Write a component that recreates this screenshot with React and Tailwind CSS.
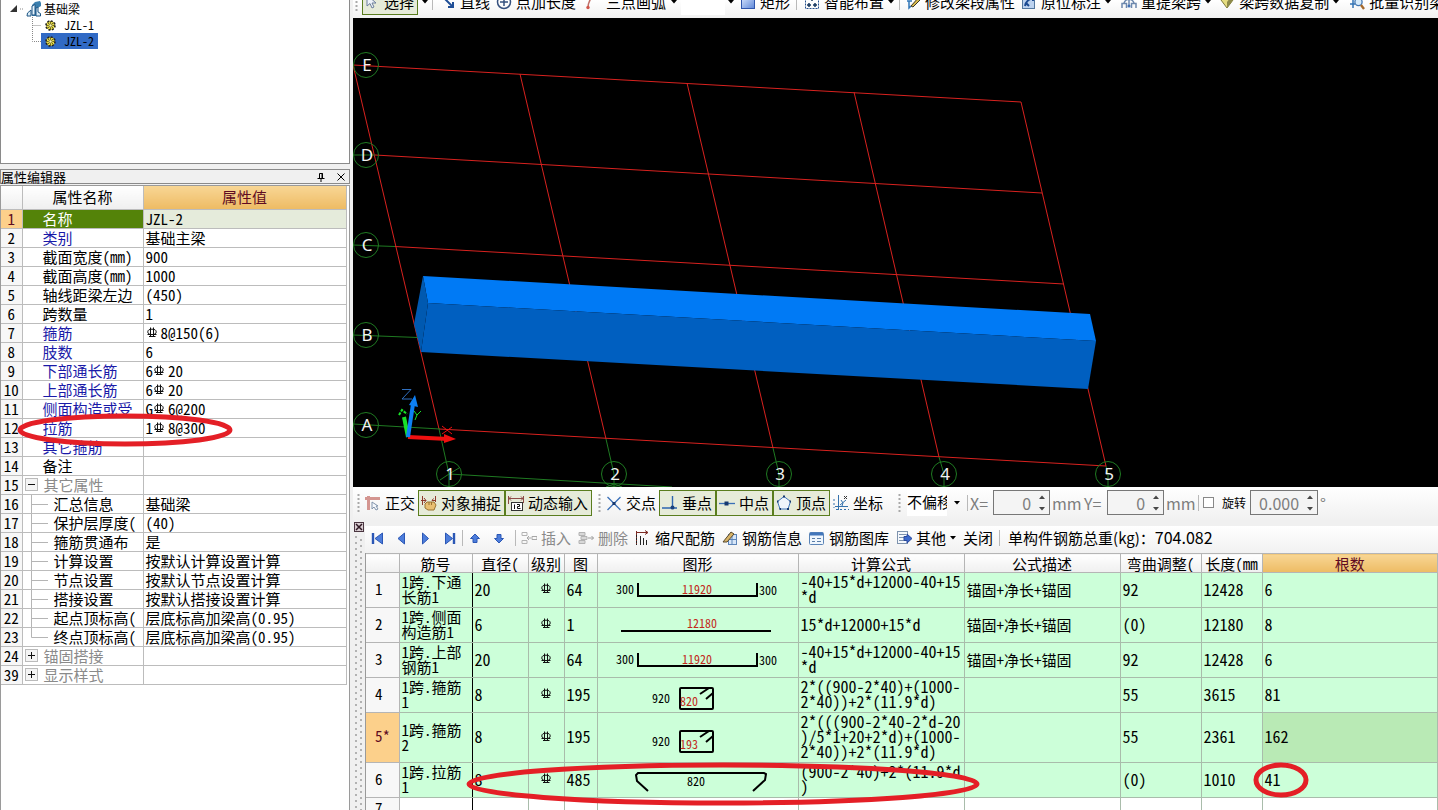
import React from "react";

const MONO = "font-['Noto_Sans_Mono_CJK_SC','Noto_Sans_CJK_SC',monospace]";
const SANS = "font-['Noto_Sans_CJK_SC',sans-serif]";

/* ---------- small drawings ---------- */

function Rebar() {
  return (
    <svg className="mr-0.5 inline-block align-[0px]" width="13" height="12" viewBox="0 0 13 12" fill="none" stroke="#111" strokeWidth="1" role="img" aria-label="HRB400">
      <path d="M4.5 0.5V10M7.5 0.5V10M3 9.5H9.5M1.5 7.500H10.5" />
      <ellipse cx="6" cy="4.9" rx="4.2" ry="2.7" />
    </svg>
  );
}

const Caret = () => (
  <svg width="6" height="4" viewBox="0 0 6 4" className="shrink-0"><path d="M0 0H6L3 3.5Z" fill="#000" /></svg>
);

function Svg({ children, w = 16, h = 16 }) {
  return (
    <svg width={w} height={h} viewBox={`0 0 ${w} ${h}`} fill="none" className="shrink-0">{children}</svg>
  );
}

const icons = {
  cursor: <Svg><path d="M3 1V12L6 9.5L8 14L10 13L8 9H12Z" fill="#eef3fa" stroke="#6c7f9c" /></Svg>,
  line: <Svg><path d="M3 3L13 13M13 8V13H8" stroke="#1f4e96" strokeWidth="2" /></Svg>,
  plusCircle: <Svg><circle cx="8" cy="8" r="6.5" stroke="#35507e" strokeWidth="1.5" /><path d="M8 4V12M4 8H12" stroke="#35507e" strokeWidth="1.5" /></Svg>,
  arc: <Svg w={8}><path d="M2 14C2 9 4 5 7 2" stroke="#c07068" strokeWidth="1.5" /><circle cx="2" cy="13.5" r="1.7" fill="#d0564a" /></Svg>,
  rect: <Svg><defs><linearGradient id="rg" x1="0" y1="0" x2="1" y2="1"><stop offset="0" stopColor="#dbe8ff" /><stop offset="1" stopColor="#5c86d8" /></linearGradient></defs><rect x="1.5" y="2.5" width="13" height="12" fill="url(#rg)" stroke="#2f56ad" /></Svg>,
  smart: <Svg><rect x="1.5" y="1.5" width="13" height="13" stroke="#24518f" strokeDasharray="2 1" /><path d="M5 9V13M3 11H7M11 9V13M9 11H13M8 3V7M6 5H10" stroke="#16375f" strokeWidth="1.500" /></Svg>,
  editSpan: <Svg><path d="M1 3H8M2 7H7M4 7V14L6 12" stroke="#3177b8" strokeWidth="1.5" /><path d="M6 12L14 3L16 5L8 13Z" fill="#d9ba4a" stroke="#3d3823" /></Svg>,
  origin: <Svg><rect x="1.5" y="3.5" width="12" height="11" fill="#bcd2ef" stroke="#53779f" /><path d="M4 12C5 7 8 5 12 4M12 1V7M5 9L8 12" stroke="#1c4b93" strokeWidth="2" /></Svg>,
  spans: <Svg><path d="M1 14V9.500H5.500V14M10.500 14V9.500H15V14M3 9C5 4 11 4 13 9M8 12V6" stroke="#6d88ad" strokeWidth="1.5" /><circle cx="8" cy="12" r="1.5" fill="#3f6fb5" /></Svg>,
  copy: <Svg><path d="M2 6L8 2L14 6L8 14Z" fill="#e6dd80" stroke="#7e7a3c" /><path d="M8 14L14 6L11 4L8 8Z" fill="#8d8a4a" /></Svg>,
  identify: <Svg><path d="M1 5H6M1 10H6M4 2V14M10 2V5" stroke="#3474b5" strokeWidth="1.5" /><circle cx="9.5" cy="8" r="3.6" fill="#d8ecfb" stroke="#4378b3" strokeWidth="1.3" /><path d="M12 11L15 15" stroke="#a5692c" strokeWidth="2.4" /></Svg>,
  ortho: <Svg><path d="M0 3.5H15M3.5 1V15" stroke="#d49590" strokeWidth="3" /><path d="M7 7V14L9 12L11 15L13 14L11 11H13Z" fill="#f5f8fc" stroke="#8093ab" /></Svg>,
  snap: <Svg><path d="M1.5 1V10M14.5 1V7M0 5.5H5M3 3L5 5.5L3 8M15 5.5H11M12.500 3.500L11 5.500" stroke="#8e3a2c" /><path d="M4 9L6 7H13L15 10L13 15H7L4 13Z" fill="#e8bf72" stroke="#9a7433" /><path d="M8 7V10M10.500 7V10" stroke="#9a7433" /></Svg>,
  dynamic: <Svg><path d="M0.500 1V9M15.500 1V8M1 3.500H15M3 1.500L1 3.500L3 5.500M13 1.500L15 3.500L13 5.500" stroke="#8e4a46" /><rect x="3.500" y="7.500" width="11" height="8" fill="#fff" stroke="#333" /><path d="M6.500 9.500V14M9 9.500H11.500V11.500H9.500V13.500H12.500" stroke="#111" /></Svg>,
  cross: <Svg><path d="M1.500 2L14.500 15M14.500 2L1.500 15" stroke="#3a6fb7" strokeWidth="1.3" /><rect x="6.500" y="7" width="3" height="3" fill="#16386f" /></Svg>,
  perp: <Svg><path d="M10.500 1V13M0 13H15" stroke="#2e66b0" strokeWidth="1.4" /><circle cx="10.500" cy="12.500" r="2" fill="#1b427e" /></Svg>,
  mid: <Svg><path d="M0 8.500H16" stroke="#3a6fb7" strokeWidth="1.3" /><rect x="5.500" y="6.500" width="4" height="4" fill="#16386f" /></Svg>,
  vertex: <Svg><path d="M8 1.500L14.500 6.500L12 14H4L1.500 6.500Z" fill="#f1f6fb" stroke="#4076bb" /><path d="M7 1.500H9M1 6.500H2.500M13.500 6.500H15M3.500 14H5M11 14H13" stroke="#16386f" strokeWidth="2" /></Svg>,
  coord: <Svg><path d="M5.500 0V15M2 11.500H15M7 10L13 5M8 5L10 8L9 11" stroke="#3471ac" /><path d="M1 4V13M3 14.500H16" stroke="#3471ac" strokeDasharray="2 2" /><path d="M11 1L14 4M14 1L11 4" stroke="#333" /></Svg>,
  insert: <Svg><path d="M1 2.500H6V5.500H1ZM1 10.500H6V13.500H1Z" stroke="#b3b3b3" /><path d="M6 8H10M8 6L6 8L8 10M11 6.500H16V9.500H11Z" stroke="#a6a6a6" /></Svg>,
  remove: <Svg><path d="M1 2.500H7V5.500H1ZM1 10.500H7V13.500H1ZM3 6.500H9V9.500H3Z" fill="#d8d8d8" stroke="#b3b3b3" /><path d="M10 8H15.500M13.500 6L15.500 8L13.500 10" stroke="#9c9c9c" /></Svg>,
  scale: <Svg><path d="M1.500 1V15M1 2.500H13M10 0.500L13 2.500L10 4.500" stroke="#7d2c25" /><path d="M5.500 6V15M8.500 8V15M11.500 10V15" stroke="#222" /><path d="M1.500 5V15" stroke="#222" strokeDasharray="2 1" /></Svg>,
  info: <Svg><rect x="6.500" y="4.500" width="8" height="10" fill="#d7e6f8" stroke="#5d85b8" /><path d="M10 5V14M6 9.500H15" stroke="#5d85b8" /><path d="M1 12L9 2L12 4L5 12Z" fill="#d8b468" stroke="#57472b" /></Svg>,
  library: <Svg><rect x="0.500" y="2.500" width="14" height="12" rx="1" fill="#eff6fd" stroke="#5b84b7" /><path d="M1 4H14" stroke="#4276bb" strokeWidth="3" /><path d="M3 8.500H6M3 11.500H6M8 8.500H12M8 11.500H12" stroke="#5a7da8" /></Svg>,
  other: <Svg><rect x="1.500" y="1.500" width="10" height="12" fill="#f5f8fc" stroke="#7e93ae" /><path d="M3 4.500H10M3 7.500H8M3 10.500H8" stroke="#7e93ae" /><path d="M8 6.500H11V4L16 8.500L11 13V10.500H8Z" fill="#3c69cc" stroke="#29489c" /></Svg>,
  first: <Svg><path d="M3 3V14" stroke="#2b57b5" strokeWidth="2.400" /><path d="M12.500 3V14L5 8.500Z" fill="#4d7ddb" stroke="#2b57b5" /></Svg>,
  prev: <Svg><path d="M10.500 3V14L4 8.500Z" fill="#4d7ddb" stroke="#2b57b5" /></Svg>,
  next: <Svg><path d="M4.500 3V14L10.500 8.500Z" fill="#4d7ddb" stroke="#2b57b5" /></Svg>,
  last: <Svg><path d="M12 3V14" stroke="#2b57b5" strokeWidth="2.400" /><path d="M3.500 3V14L10.500 8.500Z" fill="#4d7ddb" stroke="#2b57b5" /></Svg>,
  up: <Svg><path d="M8 4L12.500 8.500H10V12.500H6V8.500H3.500Z" fill="#4d7ddb" stroke="#2b57b5" /></Svg>,
  down: <Svg><path d="M8 13L12.500 8.500H10V4.500H6V8.500H3.500Z" fill="#4d7ddb" stroke="#2b57b5" /></Svg>,
};

const Gear = () => (
  <svg width="11" height="11" viewBox="0 0 11 11" className="shrink-0">
    <circle cx="5.500" cy="5.500" r="4.500" fill="#eee34a" stroke="#222" strokeWidth="1.600" strokeDasharray="2 1.500" />
    <path d="M5.500 1V3.500M5.500 7.500V10M1 5.500H3.500M7.500 5.500H10M2.300 2.300L4 4M7 7L8.700 8.700M8.700 2.300L7 4M4 7L2.300 8.700" stroke="#4e4a18" strokeWidth="0.800" />
    <circle cx="5.500" cy="5.500" r="1.600" fill="#fbf7b8" stroke="#4e4a18" strokeWidth="0.700" />
  </svg>
);

/* ---------- toolbar parts ---------- */

const Sep = ({ className = "" }) => <div className={`h-4 w-px shrink-0 bg-[#b9b9b9] ${className}`} />;

const Grip = ({ className = "" }) => (
  <svg width="3" height="20" viewBox="0 0 3 20" className={`shrink-0 ${className}`}>
    <path d="M1.500 1V20" stroke="#a9a9a9" strokeWidth="2" strokeDasharray="2 2" />
  </svg>
);

function Tool({ icon, label, on, off, caret, className = "" }) {
  return (
    <button
      type="button"
      disabled={off}
      className={`flex h-[26px] shrink-0 items-center gap-1 border text-[15px] leading-5 whitespace-nowrap ${
        on ? "border-[#5a7d1e] bg-[#e6ebd9]" : "border-transparent"
      } ${off ? "text-[#8a8a8a]" : "text-black"} ${className}`}
    >
      {icon && icons[icon]}
      {label}
      {caret && <Caret />}
    </button>
  );
}

function TopToolbar() {
  return (
    <div className="flex h-[18px] items-end overflow-hidden bg-linear-to-b from-white to-[#f1f1f1] pb-[3px]">
      <div className="flex items-center">
        <Grip className="mr-1 ml-0.5" />
        <Tool icon="cursor" label="选择" on className="w-[56px] pl-px" />
        <button type="button" aria-label="选择方式" className="flex w-[14px] justify-center"><Caret /></button>
        <Sep className="mr-1.5" />
        <Tool icon="line" label="直线" className="mr-1" />
        <Tool icon="plusCircle" label="点加长度" className="mr-2" />
        <Tool icon="arc" label="三点画弧" className="gap-3" />
        <button type="button" aria-label="画弧方式" className="flex w-[14px] justify-center"><Caret /></button>
        <select aria-label="画弧半径" className="h-[26px] w-[44px] appearance-none bg-white"><option></option></select>
        <button type="button" aria-label="展开半径" className="flex w-[12px] justify-center"><Caret /></button>
        <Tool icon="rect" label="矩形" className="mr-1 ml-0.5" />
        <Sep className="mr-1.5 ml-px" />
        <Tool icon="smart" label="智能布置" caret />
        <Sep className="mr-1 ml-1" />
        <Tool icon="editSpan" label="修改梁段属性" className="mr-1" />
        <Tool icon="origin" label="原位标注" caret className="mr-2" />
        <Tool icon="spans" label="重提梁跨" caret className="mr-1.5" />
        <Tool icon="copy" label="梁跨数据复制" caret className="mr-2" />
        <Tool icon="identify" label="批量识别梁支座" />
      </div>
    </div>
  );
}

function Spin({ label, value, className }) {
  return (
    <div className={`flex h-[25px] items-center border border-[#777] bg-[#f4f4f4] pr-1 ${className}`}>
      <input aria-label={label} defaultValue={value} className="w-full min-w-0 bg-transparent pr-2 text-right text-base text-[#7d7d7d] outline-none" />
      <div className="flex flex-col gap-2">
        <button type="button" aria-label={`${label} 增大`} className="rotate-180 opacity-70"><Caret /></button>
        <button type="button" aria-label={`${label} 减小`} className="opacity-70"><Caret /></button>
      </div>
    </div>
  );
}

function SnapToolbar() {
  return (
    <div className="flex h-[33px] items-center overflow-hidden bg-linear-to-b from-white to-[#f1f1f1] pb-0.5 pl-1">
      <Grip className="mr-1" />
      <Tool icon="ortho" label="正交" className="mr-0.5" />
      <Tool icon="snap" label="对象捕捉" on className="w-[87px] pl-0.5" />
      <Tool icon="dynamic" label="动态输入" on className="w-[87px] pl-0.5" />
      <Grip className="mr-1 ml-1.5" />
      <Tool icon="cross" label="交点" className="mr-0.5" />
      <Tool icon="perp" label="垂点" on className="w-[57px] pl-0.5" />
      <Tool icon="mid" label="中点" on className="w-[57px] pl-0.5" />
      <Tool icon="vertex" label="顶点" on className="w-[57px] pl-0.5" />
      <Tool icon="coord" label="坐标" className="ml-0.5" />
      <Grip className="mr-1.5 ml-3.5" />
      <select aria-label="偏移方式" className="h-[26px] w-[40px] appearance-none bg-white text-[15px]"><option>不偏移</option></select>
      <button type="button" aria-label="展开偏移方式" className="flex w-5 justify-center"><Caret /></button>
      <Sep className="mr-0.5" />
      <span className="w-[23px] text-base text-[#7d7d7d]">X=</span>
      <Spin label="X" value="0" className="w-[57px] shrink-0" />
      <span className="ml-0.5 w-8 text-base text-[#7d7d7d]">mm</span>
      <span className="w-[23px] text-base text-[#7d7d7d]">Y=</span>
      <Spin label="Y" value="0" className="w-[57px] shrink-0" />
      <span className="ml-0.5 w-8 text-base text-[#7d7d7d]">mm</span>
      <Sep className="mr-1" />
      <label className="flex items-center gap-2 text-[12px] whitespace-nowrap">
        <input type="checkbox" className="size-[11px] appearance-none border border-[#888] bg-white" />
        旋转
      </label>
      <Spin label="旋转角度" value="0.000" className="ml-1 w-[68px] shrink-0" />
      <span className="ml-0.5 text-base text-[#7d7d7d]">°</span>
    </div>
  );
}

function RebarToolbar() {
  return (
    <div className="flex h-[27px] items-center overflow-hidden bg-linear-to-b from-white to-[#f1f1f1] pb-1 pl-[5px]">
      <div className="flex gap-1.5">
        {[["first", "首条"], ["prev", "上一条"], ["next", "下一条"], ["last", "末条"]].map(([k, t]) => (
          <button key={k} type="button" aria-label={t} className="flex w-[18px]">{icons[k]}</button>
        ))}
      </div>
      <Sep className="mr-1 ml-0.5" />
      <button type="button" aria-label="上移" className="mr-2">{icons.up}</button>
      <button type="button" aria-label="下移" className="mr-2">{icons.down}</button>
      <Sep className="mr-1" />
      <Tool icon="insert" label="插入" off className="mr-[5px]" />
      <Tool icon="remove" label="删除" off className="mr-[5px]" />
      <Tool icon="scale" label="缩尺配筋" className="mr-[5px]" />
      <Tool icon="info" label="钢筋信息" className="mr-[5px]" />
      <Tool icon="library" label="钢筋图库" className="mr-[5px]" />
      <Tool icon="other" label="其他" caret className="mr-[5px]" />
      <Tool label="关闭" className="mr-[5px]" />
      <Sep className="mr-2" />
      <span className="text-[15px] leading-5 whitespace-nowrap">单构件钢筋总重(kg)：<span className="text-base leading-5">704.082</span></span>
    </div>
  );
}

/* ---------- left side ---------- */

function Tree() {
  return (
    <div className="h-[164px] border-x border-b border-[#8a8a8a] bg-white pt-px pl-[9px] text-[12px]">
      <div className="flex h-4 items-center">
        <svg width="8" height="8" viewBox="0 0 8 8"><path d="M7 0V7H0Z" fill="#333" /></svg>
        <svg width="4" height="2" className="mx-0.5"><path d="M0 1H4" stroke="#888" strokeDasharray="1 1" /></svg>
        <svg width="16" height="16" viewBox="0 0 16 16" className="mr-0.5">
          <path d="M6 4L9 1L14 0L15 2V5L10 8V15H6Z" fill="#3b7fae" />
          <path d="M6 5L9 3.500V14H6Z" fill="#e6f3fb" stroke="#1d5584" />
          <path d="M1 15L1.500 12L5 9V15ZM10 15V7L12 6V11L14.500 12.500V15Z" fill="#dcedf8" stroke="#1d5584" />
        </svg>
        <span className="leading-4">基础梁</span>
      </div>
      <ul className={`ml-[22px] ${MONO}`}>
        {["JZL-1", "JZL-2"].map((n, i) => (
          <li key={n} className="flex h-4 items-center">
            <svg width="9" height="16" viewBox="0 0 9 16">
              <path d={i ? "M0.500 0V8.500H9" : "M0.500 0V16M0.500 8.500H9"} fill="none" stroke="#888" strokeDasharray="1 1" />
            </svg>
            <a href={`#${n}`} className={`flex h-4 w-[57px] items-center gap-2 pl-1 ${i ? "bg-[#316ac5]" : ""}`}>
              <Gear />
              <span className="leading-4">{n}</span>
            </a>
          </li>
        ))}
      </ul>
    </div>
  );
}

const R = "⌀";
const props = [
  ["1", "名称", "JZL-2", "sel"],
  ["2", "类别", "基础主梁", "blue"],
  ["3", "截面宽度(mm)", "900"],
  ["4", "截面高度(mm)", "1000"],
  ["5", "轴线距梁左边", "(450)"],
  ["6", "跨数量", "1"],
  ["7", "箍筋", R + "8@150(6)", "blue"],
  ["8", "肢数", "6", "blue"],
  ["9", "下部通长筋", "6" + R + "20", "blue"],
  ["10", "上部通长筋", "6" + R + "20", "blue"],
  ["11", "侧面构造或受", "G" + R + "6@200", "blue"],
  ["12", "拉筋", "1" + R + "8@300", "blue"],
  ["13", "其它箍筋", "", "blue"],
  ["14", "备注", ""],
  ["15", "其它属性", "", "minus"],
  ["16", "汇总信息", "基础梁", "child"],
  ["17", "保护层厚度(", "(40)", "child"],
  ["18", "箍筋贯通布", "是", "child"],
  ["19", "计算设置", "按默认计算设置计算", "child"],
  ["20", "节点设置", "按默认节点设置计算", "child"],
  ["21", "搭接设置", "按默认搭接设置计算", "child"],
  ["22", "起点顶标高(", "层底标高加梁高(0.95)", "child"],
  ["23", "终点顶标高(", "层底标高加梁高(0.95)", "last"],
  ["24", "锚固搭接", "", "plus"],
  ["39", "显示样式", "", "plus"],
];

const nameStyle = {
  sel: "bg-[#548309] text-white pl-5",
  blue: "text-[#1a1aa8] pl-5",
  plain: "pl-5",
  minus: "text-[#8a8a8a]",
  plus: "text-[#8a8a8a]",
  child: "",
  last: "",
};

function Toggle({ open }) {
  return (
    <button type="button" aria-label={open ? "折叠" : "展开"} className="mr-1.5 ml-0.5 flex shrink-0">
      <svg width="13" height="13" viewBox="0 0 13 13" fill="none">
        <rect x="0.500" y="0.500" width="12" height="12" fill="#f4f4f4" stroke="#bbb" />
        <path d={open ? "M3 6.500H10" : "M3 6.500H10M6.500 3V10"} stroke="#111" />
      </svg>
    </button>
  );
}

function Branch({ last }) {
  return (
    <svg width="30" height="18" viewBox="0 0 30 18" fill="none" className="mr-px shrink-0">
      <path d={last ? "M8.500 0V9.500H25" : "M8.500 0V18M8.500 9.500H25"} stroke="#b5b5b5" />
    </svg>
  );
}

function PropertyEditor() {
  return (
    <div className="mt-[5px] flex min-h-0 flex-1 flex-col">
      <div className="flex h-[15px] shrink-0 items-center border border-[#8a8a8a] bg-[#f0f0f0] pr-1">
        <h2 className="flex-1 text-[13px] leading-[13px]">属性编辑器</h2>
        <button type="button" aria-label="固定" className="mr-3">
          <svg width="8" height="10" viewBox="0 0 8 10" fill="none" stroke="#000"><path d="M2.500 6V1.500H5.500V6M5 1V6M0.500 6.500H7.500M4 7V10" /></svg>
        </button>
        <button type="button" aria-label="关闭">
          <svg width="8" height="8" viewBox="0 0 8 8" stroke="#000"><path d="M0.500 0.500L7.500 7.500M7.500 0.500L0.500 7.500" /></svg>
        </button>
      </div>
      <div className="mt-px flex-1 border-x border-t border-[#9a9a9a] bg-white pr-px">
        <table className={`w-[345px] table-fixed border-collapse text-[15px] leading-[18px] ${MONO}`}>
          <colgroup><col className="w-[21px]" /><col className="w-[121px]" /><col className="w-[203px]" /></colgroup>
          <thead>
            <tr className="h-[23px] [&>th]:border [&>th]:border-t-0 [&>th]:border-l-0 [&>th]:border-[#bcbcbc] [&>th]:p-0 [&>th]:font-normal">
              <th className="bg-linear-to-b from-white to-[#efefef]" />
              <th className="bg-linear-to-b from-white to-[#efefef]">属性名称</th>
              <th className="bg-linear-to-b from-[#f8d694] to-[#edbb63] text-[#5f0b22]">属性值</th>
            </tr>
          </thead>
          <tbody>
            {props.map(([n, name, val, kind = "plain"]) => (
              <tr key={n} className="h-[19px]">
                <th scope="row" className={`overflow-hidden border-r border-b border-[#bcbcbc] p-0 text-center font-normal ${kind === "sel" ? "bg-[#fcd08b] text-[#5f0b22]" : "bg-[#f7f7f7]"}`}>{n}</th>
                <td className={`overflow-hidden border-r border-b border-[#bcbcbc] p-0 whitespace-nowrap ${nameStyle[kind]}`}>
                  <div className="flex h-[18px] items-center">
                    {(kind === "minus" || kind === "plus") && <Toggle open={kind === "minus"} />}
                    {(kind === "child" || kind === "last") && <Branch last={kind === "last"} />}
                    {name}
                  </div>
                </td>
                <td className={`overflow-hidden border-r border-b border-[#bcbcbc] py-0 pr-0 pl-0.5 whitespace-nowrap ${kind === "sel" ? "bg-[#e5ebdb]" : ""}`}>
                  <div className="h-[18px]">
                    {val.split(R).map((p, i) => <React.Fragment key={i}>{i > 0 && <Rebar />}{p}</React.Fragment>)}
                  </div>
                </td>
              </tr>
            ))}
          </tbody>
        </table>
      </div>
    </div>
  );
}

/* ---------- 3D view ---------- */

const bubbles = [
  ["E", 366, 65], ["D", 366, 155], ["C", 366, 245], ["B", 366, 335], ["A", 366, 425],
  ["1", 449, 474], ["2", 614, 474], ["3", 779, 474], ["4", 944, 474], ["5", 1108, 474],
];

function Scene() {
  return (
    <div className="h-[469px] overflow-hidden bg-black">
      <svg className="block h-full w-full" viewBox="353 18 1085 469" preserveAspectRatio="xMinYMin slice" fill="none" role="img" aria-label="三维视图">
        <path stroke="#d8221f" d="M353 65L1021 102M375 155L1042 193M395 246.500L1064 284M439 429L1106 466M353 65L439 429M520 74L606 439M687 83L773 448M854 92L939 457M1021 102L1106 466" />
        <path stroke="#1f7a22" d="M353 155H375M353 245L395 246.500M353 335L418 337.500M353 424L440 429M439 429L449 474M606 439L614 474M773 448L779 474M939 457L944 474M1106 466L1108 474M449 474L672 487M449 474L440 480M449 474L459 468M449 474V487M614 474V487M779 474V487M614 484L606 487M614 484L622 487M944 487V474M1108 487V474" />
        <g stroke="#1f7a22">{bubbles.map(([t, x, y]) => <circle key={t} cx={x} cy={y} r="12.500" />)}</g>
        <path d="M423 276L1090 314L1096 341L428 303Z" fill="#007af5" />
        <path d="M428 303L1096 341L1088 389L421 352Z" fill="#005fc0" />
        <path d="M423 276L428 303L421 352L414 324Z" fill="#0059b0" />
        <g fill="#f2f2f2" fontSize="17" textAnchor="middle" className="font-['Noto_Sans',sans-serif]">
          {bubbles.map(([t, x, y]) => <text key={t} x={x + 1} y={y + 6}>{t}</text>)}
        </g>
        <path d="M408 437L404 417" stroke="#18e028" strokeWidth="4" />
        <path d="M399 415L402 410L407 414" stroke="#18e028" strokeWidth="2" strokeDasharray="3 1" />
        <path d="M414 411L417 415L421 411M417 415L415 420" stroke="#18e028" />
        <path d="M408 437L448 439" stroke="#f01010" strokeWidth="4" />
        <path d="M444 434L456 439L444 443Z" fill="#f01010" />
        <path d="M442 426L452 434M452 427L442 434" stroke="#f01010" />
        <path d="M408 437L413 404" stroke="#0d80f5" strokeWidth="4" />
        <path d="M409 405L415 395L418 407Z" fill="#0d80f5" />
        <path d="M402 389.500H411L402 399H412" stroke="#2f6fbf" />
      </svg>
    </div>
  );
}

/* ---------- rebar table ---------- */

const RED = "#c22a1c";

function Shape({ children }) {
  return (
    <svg width="200" height="34" viewBox="0 0 200 34" fill="#000" fontSize="12" className={`-mb-0.5 block ${MONO}`}>{children}</svg>
  );
}
const ShapeU = () => (
  <Shape>
    <path d="M40 9V22H159V9" fill="none" stroke="#000" strokeWidth="2" />
    <text x="18" y="20">300</text>
    <text x="161" y="21">300</text>
    <text x="84" y="20" fill={RED}>11920</text>
  </Shape>
);
const ShapeLine = () => (
  <Shape>
    <path d="M23 22H173" fill="none" stroke="#000" strokeWidth="2" />
    <text x="89" y="19" fill={RED}>12180</text>
  </Shape>
);
const ShapeBox = ({ v }) => (
  <Shape>
    <rect x="82" y="9" width="33" height="21" rx="1" fill="none" stroke="#000" strokeWidth="2" />
    <path d="M102 15L111 9M108 20L115 14" fill="none" stroke="#000" strokeWidth="2" />
    <text x="54" y="24">920</text>
    <text x="82" y="27" fill={RED}>{v}</text>
  </Shape>
);
const ShapeTie = () => (
  <Shape>
    <path d="M50 27L39 17L38 11L40 9H166L168 10L167 16L155 27" fill="none" stroke="#000" strokeWidth="2" />
    <text x="89" y="22">820</text>
  </Shape>
);

const rows = [
  ["1", "1跨.下通\n长筋1", "20", "64", <ShapeU />, "-40+15*d+12000-40+15\n*d", "锚固+净长+锚固", "92", "12428", "6"],
  ["2", "1跨.侧面\n构造筋1", "6", "1", <ShapeLine />, "15*d+12000+15*d", "锚固+净长+锚固", "(0)", "12180", "8"],
  ["3", "1跨.上部\n钢筋1", "20", "64", <ShapeU />, "-40+15*d+12000-40+15\n*d", "锚固+净长+锚固", "92", "12428", "6"],
  ["4", "1跨.箍筋\n1", "8", "195", <ShapeBox v="820" />, "2*((900-2*40)+(1000-\n2*40))+2*(11.9*d)", "", "55", "3615", "81"],
  ["5*", "1跨.箍筋\n2", "8", "195", <ShapeBox v="193" />, "2*(((900-2*40-2*d-20\n)/5*1+20+2*d)+(1000-\n2*40))+2*(11.9*d)", "", "55", "2361", "162"],
  ["6", "1跨.拉筋\n1", "8", "485", <ShapeTie />, "(900-2*40)+2*(11.9*d\n)", "", "(0)", "1010", "41"],
];

const heads = ["", "筋号", "直径(", "级别", "图", "图形", "计算公式", "公式描述", "弯曲调整(", "长度(mm", "根数"];

function RebarTable() {
  return (
    <table className={`w-full table-fixed border-collapse text-[15px] leading-[15px] ${MONO}`}>
      <colgroup>
        <col className="w-[33px]" /><col className="w-[73px]" /><col className="w-[56px]" /><col className="w-[36px]" />
        <col className="w-[33px]" /><col className="w-[201px]" /><col className="w-[166px]" /><col className="w-[156px]" />
        <col className="w-[81px]" /><col className="w-[61px]" /><col />
      </colgroup>
      <thead>
        <tr className="h-[19px]">
          {heads.map((h, i) => (
            <th key={i} className={`overflow-hidden border border-l-0 border-[#b5b5b5] p-0 font-normal whitespace-nowrap ${i === 10 ? "bg-linear-to-b from-[#f8d694] to-[#edbb63] text-[#5f0b22]" : "bg-linear-to-b from-white to-[#efefef]"}`}>{h}</th>
          ))}
        </tr>
      </thead>
      <tbody className="[&_td]:border [&_td]:border-[#a9bcab] [&_td]:pt-0 [&_td]:pr-0 [&_td]:pb-0.5 [&_td]:pl-0.5 [&_td]:whitespace-pre">
        {rows.map(([n, name, d, pic, shape, formula, desc, bend, len, count]) => {
          const cur = n === "5*";
          return (
            <tr key={n} className={`bg-[#ccffd9] ${cur ? "h-[50px]" : "h-[35px]"}`}>
              <th scope="row" className={`border border-l-0 border-[#b5b5b5] pt-0 pr-0 pb-1 pl-[9px] text-left font-normal ${cur ? "bg-[#fcd08b] text-[#5f0b22]" : "bg-[#f7f7f7]"}`}>{n}</th>
              <td className="border-r-black!">{name}</td>
              <td className="text-base leading-[15px]!">{d}</td>
              <td><div className="flex justify-center"><Rebar /></div></td>
              <td className="text-base leading-[15px]!">{pic}</td>
              <td className="p-0!">{shape}</td>
              <td className="overflow-hidden text-base leading-[15px]!">{formula}</td>
              <td>{desc}</td>
              <td className="text-base leading-[15px]!">{bend}</td>
              <td className="text-base leading-[15px]!">{len}</td>
              <td className={`text-base leading-[15px]! ${cur ? "bg-[#b9eab5]" : ""}`}>{count}</td>
            </tr>
          );
        })}
        <tr className="h-[35px] bg-white">
          <th scope="row" className="border border-l-0 border-[#b5b5b5] bg-[#f7f7f7] pt-0.5 pr-0 pb-0 pl-[9px] text-left align-top font-normal">7</th>
          <td className="border-r-black!" /><td /><td /><td /><td /><td /><td /><td /><td /><td />
        </tr>
      </tbody>
    </table>
  );
}

function RebarPanel() {
  return (
    <div className="mt-1.5 flex min-h-0 flex-1 bg-[#f0f0f0]">
      <div className="flex w-3 shrink-0 flex-col">
        <button type="button" aria-label="关闭面板" className="-mt-1 ml-px">
          <svg width="10" height="10" viewBox="0 0 10 10"><rect x="0.500" y="0.500" width="9" height="9" fill="#d8cdd2" stroke="#4a3540" /><path d="M2 2L8 8M8 2L2 8" stroke="#2e1822" strokeWidth="1.500" /></svg>
        </button>
        <svg className="mt-1 w-full flex-1">
          <path d="M3 0V400M8 3V400" stroke="#b2b2b2" strokeWidth="2" strokeDasharray="2 4" />
        </svg>
      </div>
      <div className="min-w-0 flex-1">
        <RebarToolbar />
        <div className="border-l border-[#9a9a9a]"><RebarTable /></div>
      </div>
    </div>
  );
}

export default function App() {
  return (
    <div className={`relative flex h-screen w-full overflow-hidden bg-[#f0f0f0] text-black ${SANS}`}>
      <aside className="flex w-[350px] shrink-0 flex-col">
        <Tree />
        <PropertyEditor />
      </aside>
      <main className="ml-[3px] flex min-w-0 flex-1 flex-col">
        <TopToolbar />
        <Scene />
        <SnapToolbar />
        <RebarPanel />
      </main>
      <svg className="pointer-events-none absolute inset-0 h-full w-full" fill="none" stroke="#e41f26" strokeWidth="5" aria-hidden="true">
        <ellipse cx="125" cy="430" rx="105" ry="14" />
        <ellipse cx="723" cy="784" rx="254" ry="19" />
        <ellipse cx="1281" cy="780" rx="25" ry="15" />
      </svg>
    </div>
  );
}
